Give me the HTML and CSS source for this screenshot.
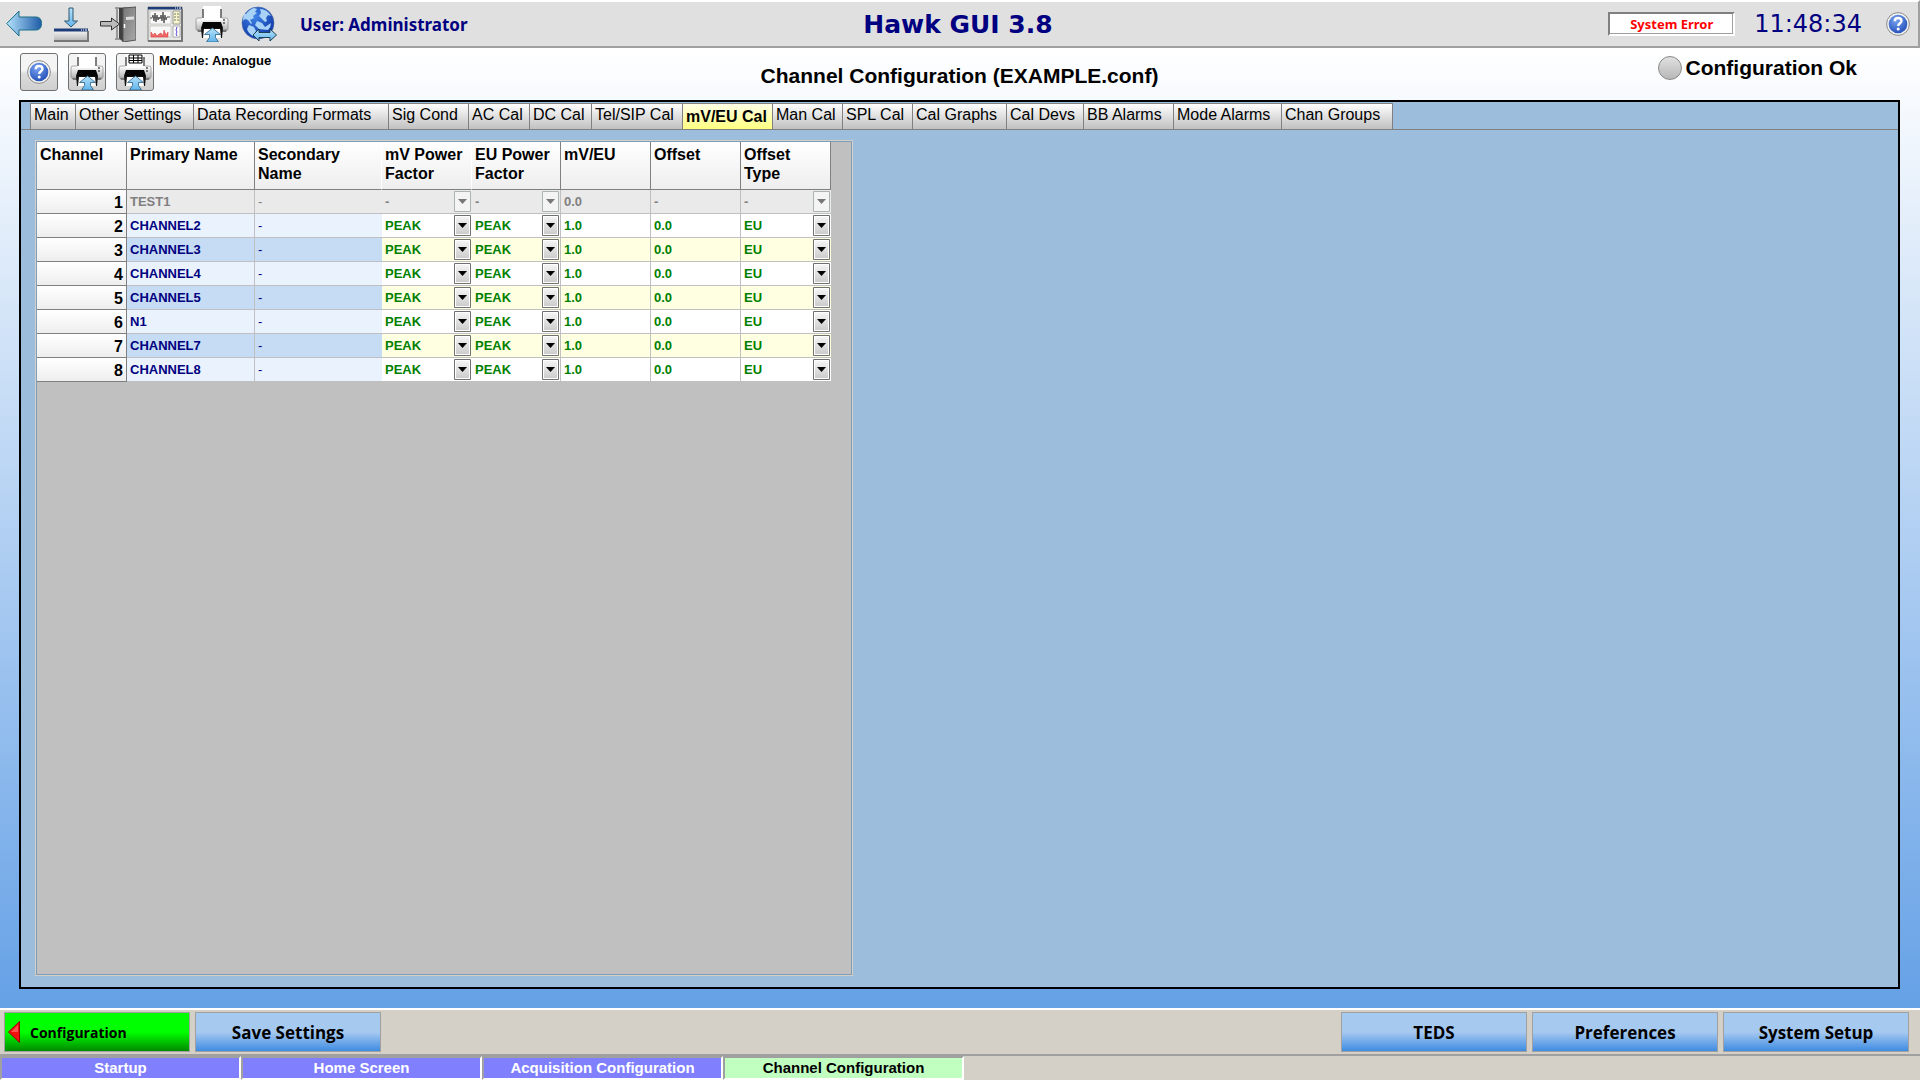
FILE: index.html
```html
<!DOCTYPE html>
<html lang="en">
<head>
    <meta charset="UTF-8">
    <meta name="viewport" content="width=device-width, initial-scale=1.0">
    <title>Hawk GUI 3.8</title>
    <link rel="stylesheet" href="styles.css">
</head>
<body>
    <!-- shared gradients and icons -->
    <svg class="defs" aria-hidden="true">
        <defs>
            <linearGradient id="gArrow"><stop offset="0" stop-color="#b4e2fb"/><stop offset="1" stop-color="#1f5ca8"/></linearGradient>
            <linearGradient id="gLight" x2="0" y2="1"><stop offset="0" stop-color="#b5e2fb"/><stop offset="1" stop-color="#62b4ec"/></linearGradient>
            <linearGradient id="gGrey" x2="0" y2="1"><stop offset="0" stop-color="#ffffff"/><stop offset="1" stop-color="#b4b4b4"/></linearGradient>
            <linearGradient id="gDoor" x2="1" y2="1"><stop offset="0" stop-color="#777"/><stop offset="1" stop-color="#aaa"/></linearGradient>
            <radialGradient id="gBlue" cx=".4" cy=".3" r=".8"><stop offset="0" stop-color="#7ba4f0"/><stop offset="1" stop-color="#1b48b4"/></radialGradient>
            <radialGradient id="gGlobe" cx=".4" cy=".3" r=".8"><stop offset="0" stop-color="#3f83e6"/><stop offset="1" stop-color="#0b2fa0"/></radialGradient>
        </defs>
        <symbol id="help" viewBox="0 0 24 24">
            <circle cx="12" cy="12" r="11.4" fill="#f2f2f2" stroke="#8b8b8b"/>
            <circle cx="12" cy="12" r="9.3" fill="url(#gBlue)"/>
            <path d="M8.7 9.3c0-2.2 1.5-3.3 3.4-3.3s3.4 1.1 3.4 3c0 2.200-3.300 2.400-3.300 5" fill="none" stroke="#fff" stroke-width="2.3"/>
            <circle cx="12.2" cy="17" r="1.5" fill="#fff"/>
        </symbol>
        <symbol id="printer" viewBox="0 0 34 36">
            <path d="M1 14q0-2 2-2h28q2 0 2 2v9q0 1-1 1H2q-1 0-1-1z" fill="url(#gGrey)" stroke="#888" stroke-width=".7"/>
            <path d="M8 0h18l1 13H7z" fill="#fff"/>
            <path d="M8 3v10M26 3v10" stroke="#000"/>
            <path d="M7 12h20v2H7z" fill="#fff"/>
            <path d="M8 16h18l2 6H6z" fill="#050505"/>
            <path d="M2 24h30l-1 2H3z" fill="#777"/>
            <path d="M6 22h22l-1 10H7z" fill="#111"/>
            <path d="M9 23h16l1 9H8z" fill="#fff"/>
            <path d="M28 14h2M28 17h2" stroke="#555" stroke-width="1.5"/>
            <path d="M17.500 22l8 6.500h-5v3l3 4.500h-12l3-4.500v-3h-5z" fill="url(#gLight)" stroke="#2a5e80" stroke-width=".8"/>
        </symbol>
    </svg>

    <header class="topbar">
        <div class="top-left">
            <button class="tool" aria-label="Back">
                <svg width="36" height="36" viewBox="0 0 36 36"><path d="M.7 17.5L13 5v6h17q5.500 0 5.500 6.500T30 24H13v6z" fill="url(#gArrow)" stroke="#1b7187"/></svg>
            </button>
            <button class="tool" aria-label="Load">
                <svg width="36" height="36" viewBox="0 0 36 36">
                    <path d="M16 2h4v13h4.500L18 21l-6.500-6H16z" fill="url(#gLight)" stroke="#31566d"/>
                    <path d="M1 23h34v12H1z" fill="url(#gGrey)"/>
                    <path d="M1 22.500h34v3H1z" fill="#1e3c78"/>
                    <path d="M28 24h1m1 0h1m1 0h2" stroke="#fff"/>
                    <path d="M1 35h34V25" fill="none" stroke="#777" stroke-width="2"/>
                </svg>
            </button>
            <button class="tool" aria-label="Exit">
                <svg width="36" height="36" viewBox="0 0 36 36">
                    <path d="M15 2h12M15 33h10M17 2v31" stroke="#999" stroke-width="2"/>
                    <path d="M19 2h4v34l-4-4z" fill="#3f3f3f"/>
                    <path d="M23 2l13-1v33l-13 2z" fill="url(#gDoor)" stroke="#555"/>
                    <path d="M26 11l8-.5v3l-8 .5z" fill="#ddd"/>
                    <path d="M24.500 18v4" stroke="#fff" stroke-width="1.5"/>
                    <path d="M.5 15.500h11V12l8 6-8 6v-4H.5z" fill="#bbb" stroke="#333"/>
                </svg>
            </button>
            <button class="tool" aria-label="Charts">
                <svg width="36" height="36" viewBox="0 0 36 36">
                    <path d="M1 1h34v34H1z" fill="#e7e7e4" stroke="#888"/>
                    <path d="M1 1h34v2.500H1z" fill="#1e3c78"/>
                    <path d="M28 2h1m1 0h1m1 0h2" stroke="#fff"/>
                    <path d="M3 5h21v13H3zM3 20h21v11H3z" fill="#f8f8f8" stroke="#aaa" stroke-width=".5"/>
                    <path d="M3 12h2l1-3 1 6 1-8 1 9 1-7 1 5 1-3 1 2 1-4 1 6 1-9 1 11 1-8 1 5 1-3h3" fill="none" stroke="#555"/>
                    <path d="M4 31v-5l2 3 2-2 2 3 2-2 2-1 2 3 1-6 2 5 2-3v5z" fill="#f06868" stroke="#d33" stroke-width=".5"/>
                    <path d="M26 5h7v13h-7z" fill="#f7f7c8" stroke="#999"/>
                    <path d="M27 8h2m1 0h2M27 11h2m1 0h2M27 14h2m1 0h2" stroke="#777"/>
                    <path d="M26 20h7v11h-7z" fill="#fff" stroke="#aaa"/>
                    <path d="M30 21l-1 3 1 2-1 2 1 2" fill="none" stroke="#54c"/>
                    <path d="M1 35h34V3" fill="none" stroke="#777" stroke-width="2"/>
                </svg>
            </button>
            <button class="tool" aria-label="Print">
                <svg width="36" height="36"><use href="#printer"/></svg>
            </button>
            <button class="tool" aria-label="Network">
                <svg width="36" height="36" viewBox="0 0 36 36">
                    <circle cx="17" cy="17" r="16" fill="url(#gGlobe)" stroke="#4a68a5" stroke-width=".6"/>
                    <path d="M5 8q4-5 8-6l3 1-2 3 2 1-4 3 1 2-4 2 2 3-1 1-3-4-3-1-2 2q0-4 1-7zM19 3q7 0 11 7l-3-1-2 3 1 3-2 1-3-3-3-3 2-3zM16 15l5 2 3 4 6-4q0 4-3 7l-9-1-4-4zM8 19l5 2 2 4-3 5q-5-3-6-7z" fill="#a8d2f6"/>
                    <path d="M12 29l6-6v3.500h11V23l6.500 6-6.500 6v-3.500H18V35z" fill="url(#gLight)" stroke="#1f3f55"/>
                </svg>
            </button>
            <span class="user">User: Administrator</span>
        </div>
        <h1 class="app-title">Hawk GUI 3.8</h1>
        <div class="top-right">
            <span class="error">System Error</span>
            <time class="clock">11:48:34</time>
            <button class="tool" aria-label="Help"><svg width="24" height="24"><use href="#help"/></svg></button>
        </div>
    </header>

    <main class="main">
        <div class="subheader">
            <div class="sub-left">
                <button class="square" aria-label="Page help"><svg width="24" height="24"><use href="#help"/></svg></button>
                <button class="square" aria-label="Print page"><svg width="34" height="36"><use href="#printer"/></svg></button>
                <button class="square" aria-label="Print table">
                    <svg width="34" height="36" viewBox="0 0 34 36">
                        <use href="#printer"/>
                        <path d="M11 1h13v8H11zM11 4h13M11 6.500h13M15.500 1v8M20 1v8" fill="#fff" stroke="#000"/>
                    </svg>
                </button>
                <span class="module">Module: Analogue</span>
            </div>
            <h2 class="page-title">Channel Configuration (EXAMPLE.conf)</h2>
            <div class="status"><span class="led"></span>Configuration Ok</div>
        </div>

        <section class="panel">
            <nav class="tabs">
                <button class="tab w45">Main</button>
                <button class="tab w118">Other Settings</button>
                <button class="tab w195">Data Recording Formats</button>
                <button class="tab w80">Sig Cond</button>
                <button class="tab w61">AC Cal</button>
                <button class="tab w62">DC Cal</button>
                <button class="tab w91">Tel/SIP Cal</button>
                <button class="tab w90 active">mV/EU Cal</button>
                <button class="tab w70">Man Cal</button>
                <button class="tab w70">SPL Cal</button>
                <button class="tab w94">Cal Graphs</button>
                <button class="tab w77">Cal Devs</button>
                <button class="tab w90">BB Alarms</button>
                <button class="tab w108">Mode Alarms</button>
                <button class="tab w112">Chan Groups</button>
            </nav>
            <div class="grid-area">
                <table class="grid">
                    <colgroup>
                        <col class="c90"><col class="c128"><col class="c127"><col class="c90">
                        <col class="c89"><col class="c90"><col class="c90"><col class="c90">
                    </colgroup>
                    <thead>
                        <tr>
                            <th>Channel</th>
                            <th>Primary Name</th>
                            <th class="open">Secondary Name</th>
                            <th class="open">mV Power Factor</th>
                            <th>EU Power Factor</th>
                            <th>mV/EU</th>
                            <th>Offset</th>
                            <th>Offset Type</th>
                        </tr>
                    </thead>
                    <tbody id="rows"></tbody>
                </table>
            </div>
        </section>
    </main>

    <footer>
        <div class="actions">
            <button class="action back">
                <svg width="12" height="22" viewBox="0 0 12 22"><path d="M11.500.5v21L.5 11z" fill="#f01010" stroke="#900"/><path d="M10 4v7H3z" fill="#ff5050"/></svg>
                Configuration
            </button>
            <button class="action">Save Settings</button>
            <span class="spacer"></span>
            <button class="action">TEDS</button>
            <button class="action">Preferences</button>
            <button class="action">System Setup</button>
        </div>
        <nav class="screens">
            <a href="#" class="screen">Startup</a>
            <a href="#" class="screen">Home Screen</a>
            <a href="#" class="screen">Acquisition Configuration</a>
            <a href="#" class="screen current">Channel Configuration</a>
        </nav>
    </footer>

    <script>
        const names = ['TEST1', 'CHANNEL2', 'CHANNEL3', 'CHANNEL4', 'CHANNEL5', 'N1', 'CHANNEL7', 'CHANNEL8'];

        function select(label, value, off) {
            return `<select aria-label="${label}" ${off}><option>${value}</option></select>`;
        }

        function input(label, value, off) {
            return `<input type="text" aria-label="${label}" value="${value}" ${off}>`;
        }

        // The first channel is switched off, so its controls are disabled
        document.getElementById('rows').innerHTML = names.map((name, i) => {
            const off = i === 0 ? 'disabled' : '';
            const ch = `channel ${i + 1}`;
            return `<tr class="${off}">
                <th scope="row">${i + 1}</th>
                <td class="name">${name}</td>
                <td class="name second">-</td>
                <td>${select('mV power factor ' + ch, off ? '-' : 'PEAK', off)}</td>
                <td class="line">${select('EU power factor ' + ch, off ? '-' : 'PEAK', off)}</td>
                <td class="line">${input('mV/EU ' + ch, off ? '0.0' : '1.0', off)}</td>
                <td class="line">${input('Offset ' + ch, off ? '-' : '0.0', off)}</td>
                <td>${select('Offset type ' + ch, off ? '-' : 'EU', off)}</td>
            </tr>`;
        }).join('');
    </script>
</body>
</html>
```
FILE: styles.css
```css
* {
    box-sizing: border-box;
}

body {
    margin: 0;
    min-height: 100vh;
    display: flex;
    flex-direction: column;
    font-family: "Liberation Sans", Arial, sans-serif;
    background-color: #d4d0c8;
    color: #000;
}

button, input, select {
    font-family: inherit;
    padding: 0;
    border: none;
    background: none;
    color: inherit;
}

svg {
    display: block;
}

.defs {
    position: absolute;
    width: 0;
    height: 0;
}

/* top bar */
.topbar {
    display: grid;
    grid-template-columns: 1fr auto 1fr;
    align-items: center;
    height: 48px;
    padding: 0 8px 0 6px;
    background-color: #e0e0e0;
    border-top: 2px solid #fff;
    border-right: 2px solid #a0a0a0;
    border-bottom: 2px solid #a0a0a0;
    color: #000080;
    font-family: "DejaVu Sans", Verdana, sans-serif;
    font-weight: bold;
}

.top-left {
    display: flex;
    align-items: center;
    gap: 11px;
}

.user {
    font-family: "Noto Sans", Tahoma, sans-serif;
    font-size: 17px;
    margin-left: 12px;
}

.app-title {
    margin: 0;
    font-size: 25px;
}

.top-right {
    display: flex;
    align-items: center;
    justify-content: flex-end;
}

.error {
    width: 127px;
    height: 24px;
    line-height: 20px;
    margin-right: 19px;
    border: 2px solid;
    border-color: #808080 #fff #fff #808080;
    background-color: #fff;
    box-shadow: inset -1px -1px #a0a0a0;
    color: #f00;
    font-family: "Noto Sans", Tahoma, sans-serif;
    font-size: 13px;
    text-align: center;
}

.clock {
    font-size: 24px;
    font-weight: normal;
    margin-right: 24px;
}

/* main area */
.main {
    flex: 1;
    display: flex;
    flex-direction: column;
    padding: 5px 20px 19px 19px;
    background: linear-gradient(#fff, #65a1e6);
}

.subheader {
    display: grid;
    grid-template-columns: 1fr auto 1fr;
    height: 47px;
}

.sub-left {
    display: flex;
    gap: 10px;
    padding-left: 1px;
}

.square {
    display: flex;
    align-items: center;
    justify-content: center;
    width: 38px;
    height: 38px;
    border: 1px solid #707070;
    border-radius: 3px;
    background: linear-gradient(#f4f4f4 45%, #dcdcdc 55%, #cfcfcf);
}

.module {
    font-size: 13px;
    line-height: 16px;
    font-weight: bold;
    margin-left: -5px;
}

.page-title {
    margin: 0;
    padding-top: 10px;
    font-size: 21px;
    line-height: 26px;
}

.status {
    display: flex;
    justify-content: flex-end;
    align-items: center;
    gap: 4px;
    height: 30px;
    padding-right: 43px;
    font-size: 21px;
    font-weight: bold;
}

.led {
    width: 24px;
    height: 24px;
    border: 1px solid #888;
    border-radius: 50%;
    background: linear-gradient(#e0e0e0, #b8b8b8);
}

.panel {
    flex: 1;
    display: flex;
    flex-direction: column;
    border: 2px solid #000;
    background-color: #9dbddd;
}

.tabs {
    display: flex;
    padding: 1px 0 0 9px;
    border-bottom: 1px solid #808080;
}

.tab {
    height: 26px;
    padding: 0 0 4px 3px;
    border: 1px solid #808080;
    border-right: none;
    border-bottom: none;
    background: linear-gradient(#fff, #c0c0c0);
    font-size: 16px;
    text-align: left;
    white-space: nowrap;
}

.tab:last-child {
    border-right: 1px solid #808080;
}

.tab.active {
    padding-bottom: 0;
    background: linear-gradient(#ffffe8, #ffff80);
    font-weight: bold;
}

.w45 { width: 45px; }
.w61 { width: 61px; }
.w62 { width: 62px; }
.w70 { width: 70px; }
.w77 { width: 77px; }
.w80 { width: 80px; }
.w90 { width: 90px; }
.w91 { width: 91px; }
.w94 { width: 94px; }
.w108 { width: 108px; }
.w112 { width: 112px; }
.w118 { width: 118px; }
.w195 { width: 195px; }

/* channel table */
.grid-area {
    flex: 1;
    width: 816px;
    margin: 11px 15px 12px;
    border: 1px solid #7f9db9;
    outline: 1px solid #d4d0c8;
    background-color: #c0c0c0;
}

.grid {
    width: 794px;
    table-layout: fixed;
    border-collapse: separate;
    border-spacing: 0;
}

.c89 { width: 89px; }
.c90 { width: 90px; }
.c127 { width: 127px; }
.c128 { width: 128px; }

.grid th {
    border-right: 1px solid #808080;
    border-bottom: 1px solid #808080;
    background: linear-gradient(#fff, #eee);
    font-size: 16px;
}

.grid thead th {
    height: 48px;
    padding: 3px 0 0 3px;
    line-height: 19px;
    text-align: left;
    vertical-align: top;
}

.grid thead .open {
    border-right-color: #fff;
}

.grid tbody th {
    height: 24px;
    padding: 2px 3px 0 0;
    line-height: 18px;
    text-align: right;
}

.grid td {
    height: 24px;
    padding: 0;
    border-bottom: 1px solid #c0c0c0;
    background-color: #fff;
    color: #008000;
    font-size: 13px;
    font-weight: bold;
}

.grid .name {
    padding: 0 0 1px 3px;
    border-right: 1px solid #c0c0c0;
    background-color: #eaf3fd;
    color: #000080;
}

.grid .second {
    border-right: none;
    font-weight: normal;
}

.grid .line {
    border-right: 1px solid #c0c0c0;
}

.grid tbody tr:nth-child(odd) td {
    background-color: #ffffe1;
}

.grid tbody tr:nth-child(odd) .name {
    background-color: #c5dcf4;
}

.grid tbody .disabled:nth-child(odd) td {
    background-color: #eaeaea;
    color: #808080;
}

.grid select, .grid input {
    display: block;
    width: 100%;
    height: 23px;
    padding: 0 0 1px 3px;
    font-size: 13px;
    font-weight: bold;
    opacity: 1;
    border-radius: 0;
}

.grid select {
    appearance: none;
    background: url("data:image/svg+xml,%3Csvg xmlns='http://www.w3.org/2000/svg' width='17' height='21'%3E%3ClinearGradient id='g' x2='0' y2='1'%3E%3Cstop stop-color='%23f4f4f4'/%3E%3Cstop offset='1' stop-color='%23cccccc'/%3E%3C/linearGradient%3E%3Cpath d='M.5.5h16v20H.5z' fill='%23fff' stroke='%23707070'/%3E%3Cpath d='M2 2h13v17H2z' fill='url(%23g)'/%3E%3Cpath d='M4 8h9l-4.5 5z'/%3E%3C/svg%3E") no-repeat right 1px top 1px;
}

.grid select:disabled {
    background-image: url("data:image/svg+xml,%3Csvg xmlns='http://www.w3.org/2000/svg' width='17' height='21'%3E%3Cpath d='M.5.5h16v20H.5z' fill='%23f4f4f4' stroke='%23adb2b5'/%3E%3Cpath d='M4 8h9l-4.5 5z' fill='%23777'/%3E%3C/svg%3E");
}

/* bottom bars */
.actions {
    display: flex;
    gap: 5px;
    height: 48px;
    padding: 2px 11px 2px 4px;
    border-top: 2px solid #fff;
    border-bottom: 2px solid #a0a0a0;
}

.spacer {
    flex: 1;
}

.action {
    width: 186px;
    height: 40px;
    border: 1px solid #a0a0a0;
    background: linear-gradient(#a6c9f0 50%, #3f8ce2);
    font-family: "Open Sans", "Segoe UI", sans-serif;
    font-size: 17px;
    font-weight: bold;
}

.action.back {
    display: flex;
    align-items: center;
    gap: 10px;
    padding-left: 3px;
    background: linear-gradient(#0f0 50%, #008a00);
    font-size: 14px;
}

.screens {
    display: flex;
    height: 24px;
}

.screen {
    width: 241px;
    height: 24px;
    border: 2px solid;
    border-color: #a0a0a0 #fff #fff #a0a0a0;
    background-color: #8080ff;
    color: #fff;
    font-size: 15px;
    line-height: 20px;
    font-weight: bold;
    text-align: center;
    text-decoration: none;
}

.screen.current {
    background-color: #c0ffc0;
    color: #000;
}
```
